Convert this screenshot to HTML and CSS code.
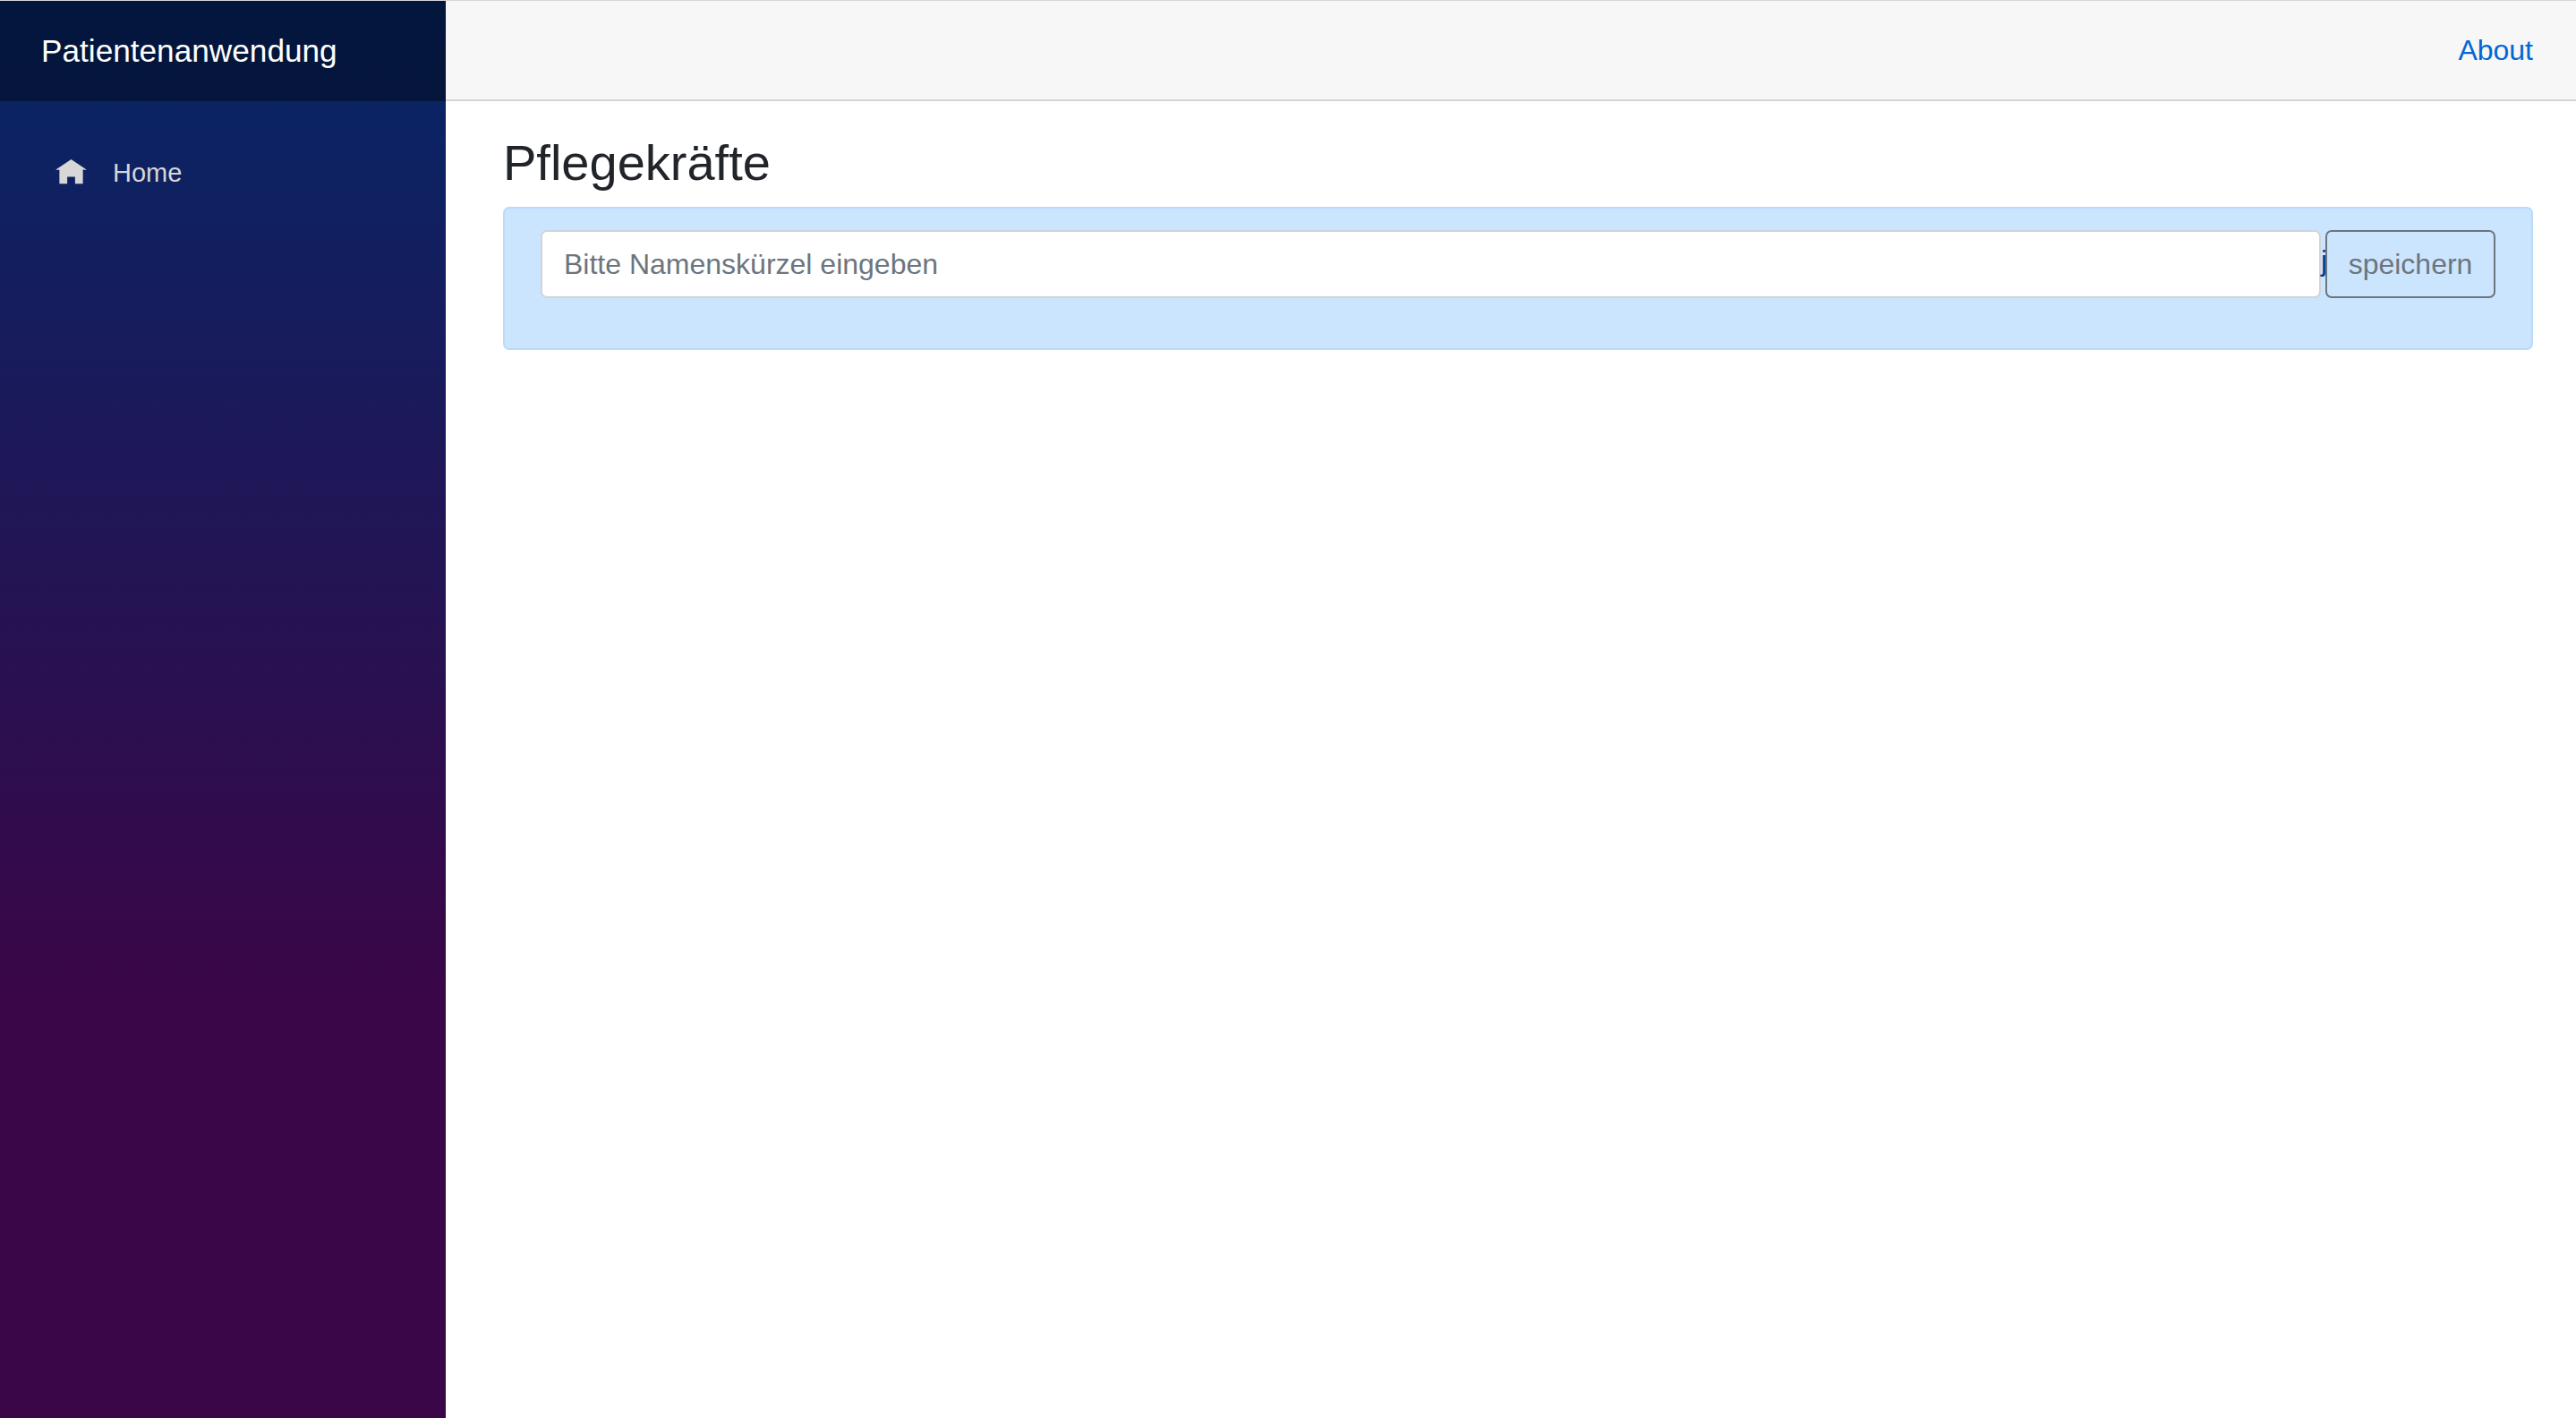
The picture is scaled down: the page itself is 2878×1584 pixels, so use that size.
FILE: index.html
```html
<!DOCTYPE html>
<html lang="de">
<head>
  <meta charset="UTF-8" />
  <title>Patientenanwendung</title>
  <link rel="stylesheet" href="styles.css">
</head>
<body>
  <div class="page">
    <aside class="sidebar">
      <div class="brand-row">
        <a href="#" class="brand">Patientenanwendung</a>
      </div>
      <nav class="nav-list">
        <a href="#" class="nav-link">
          <svg class="nav-icon" viewBox="0 0 8 8" preserveAspectRatio="none" aria-hidden="true">
            <path d="M4 0l-4 3h1v4h2v-2h2v2h2v-4.03l1 .03-4-3z" />
          </svg>
          <span>Home</span>
        </a>
      </nav>
    </aside>

    <div class="main">
      <header class="top-row">
        <a href="#" class="about-link">About</a>
      </header>

      <section class="content">
        <h3 class="page-title">Pflegekräfte</h3>
        <form class="name-form">
          <input type="text" class="name-input" placeholder="Bitte Namenskürzel eingeben" />
          <span class="stray-char">j</span>
          <button type="button" class="save-button">speichern</button>
        </form>
      </section>
    </div>
  </div>
</body>
</html>
```

FILE: styles.css
```css
html, body {
  margin: 0;
  height: 100%;
}

body {
  font-family: "Liberation Sans", Arial, sans-serif;
  background-color: #fff;
  color: #212529;
  overflow: hidden;
}

a {
  text-decoration: none;
}

.page {
  display: flex;
  box-sizing: border-box;
  height: 100%;
  border-top: 1px solid #d6d5db;
}

.sidebar {
  width: 498px;
  flex-shrink: 0;
  background-image: linear-gradient(180deg, #052767 0%, #3a0647 70%);
}

.brand-row {
  display: flex;
  align-items: center;
  height: 112px;
  padding-left: 46px;
  background-color: rgba(0, 0, 0, 0.4);
}

.brand {
  font-size: 35.2px;
  color: #fff;
}

.nav-list {
  padding: 64px 0 0 62px;
}

.nav-link {
  display: flex;
  align-items: center;
  gap: 29px;
  font-size: 29px;
  color: #d7d7d7;
}

.nav-icon {
  width: 35px;
  height: 31px;
  fill: #d7d7d7;
}

.main {
  flex-grow: 1;
  min-width: 0;
}

.top-row {
  display: flex;
  justify-content: flex-end;
  align-items: center;
  box-sizing: border-box;
  height: 112px;
  padding-right: 48px;
  background-color: #f7f7f7;
  border-bottom: 2px solid #d6d5d5;
}

.about-link {
  font-size: 32px;
  color: #0366d6;
}

.content {
  padding: 0 48px 0 64px;
}

.page-title {
  margin: 0 0 12px;
  padding-top: 32px;
  font-size: 56px;
  font-weight: 400;
  line-height: 74px;
}

.name-form {
  display: flex;
  align-items: flex-start;
  box-sizing: border-box;
  height: 160px;
  padding: 24px 40px 0 40px;
  background-color: #cce5ff;
  border: 2px solid #b8daff;
  border-radius: 7px;
}

.name-input {
  flex-grow: 1;
  min-width: 0;
  box-sizing: border-box;
  height: 76px;
  padding: 0 24px;
  font-family: inherit;
  font-size: 32px;
  color: #495057;
  background-color: #fff;
  border: 2px solid #ced4da;
  border-radius: 7px;
}

.name-input::placeholder {
  color: #6c757d;
  opacity: 1;
}

.stray-char {
  flex-shrink: 0;
  width: 5px;
  font-size: 32px;
  line-height: 68px;
  color: #003a8c;
}

.save-button {
  flex-shrink: 0;
  box-sizing: border-box;
  width: 190px;
  height: 76px;
  padding: 0;
  font-family: inherit;
  font-size: 32px;
  color: #6c757d;
  background-color: transparent;
  border: 2px solid #6c757d;
  border-radius: 7px;
}
```
